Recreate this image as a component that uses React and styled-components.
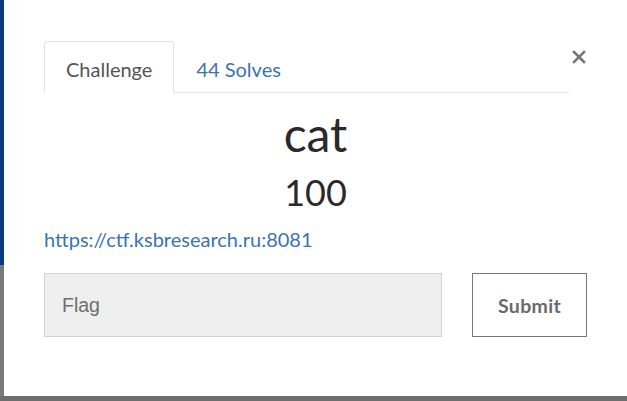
import React from 'react'
import styled, { createGlobalStyle } from 'styled-components'

const GlobalStyle = createGlobalStyle`
  html, body {
    margin: 0;
    padding: 0;
    background: #6e6e6e;
  }
  * {
    box-sizing: border-box;
  }
`

const Page = styled.div`
  width: 627px;
  height: 401px;
  display: flex;
  flex-direction: column;
  background: #6e6e6e;
  overflow: hidden;
`

const Stage = styled.div`
  height: 396px;
  display: flex;
`

const Backdrop = styled.div`
  width: 4px;
  background: linear-gradient(to bottom, #0c3a82 0, #0c3a82 265px, #7a7a7a 265px);
`

const Modal = styled.div`
  flex: 1;
  background: #fff;
  padding: 41px 40px 0 40px;
  font-family: Lato, 'Noto Sans', sans-serif;
  color: #333;
`

const Header = styled.div`
  display: flex;
  align-items: flex-start;
`

const Tabs = styled.div`
  flex: 1;
  display: flex;
  border-bottom: 1px solid #e2e2e2;
  margin-right: 1px;
`

const Tab = styled.div`
  height: 52px;
  padding: 3px 21px 0 21px;
  display: flex;
  align-items: center;
  font-size: 20px;
  border: 1px solid ${(p) => (p.$active ? '#e2e2e2' : 'transparent')};
  border-bottom-color: ${(p) => (p.$active ? '#fff' : 'transparent')};
  border-radius: 4px 4px 0 0;
  margin-bottom: -1px;
  color: ${(p) => (p.$active ? '#555' : '#3a74b2')};
  background: ${(p) => (p.$active ? '#fff' : 'transparent')};
`

const Close = styled.div`
  width: 17px;
  margin-top: 9px;
  display: flex;
  justify-content: center;
  color: #777;
`

const Title = styled.h1`
  margin: 14px 0 0;
  text-align: center;
  font-weight: 400;
  font-size: 48px;
  line-height: 54px;
  color: #2a2a2a;
`

const Points = styled.div`
  margin-top: 11px;
  text-align: center;
  font-weight: 400;
  font-size: 36px;
  line-height: 40px;
  color: #2a2a2a;
`

const Link = styled.a`
  display: block;
  margin-top: 15px;
  font-size: 20px;
  line-height: 24px;
  color: #3a74b2;
  text-decoration: none;
`

const Form = styled.div`
  margin-top: 22px;
  display: flex;
  justify-content: space-between;
`

const FlagInput = styled.input`
  width: 398px;
  height: 64px;
  padding: 0 17px;
  background: #efefef;
  border: 1px solid #d2d2d2;
  font-family: 'Liberation Sans', Arial, sans-serif;
  font-size: 19.5px;
  color: #333;
  outline: none;
  &::placeholder {
    color: #6f6f6f;
  }
`

const SubmitButton = styled.button`
  width: 115px;
  height: 64px;
  background: #fff;
  border: 1px solid #777;
  font-family: Lato, 'Noto Sans', sans-serif;
  font-weight: 700;
  font-size: 19.5px;
  color: #6a6a6a;
  letter-spacing: 0.3px;
`

export default function App() {
  return (
    <>
      <GlobalStyle />
      <Page>
        <Stage>
          <Backdrop />
          <Modal>
            <Header>
              <Tabs>
                <Tab $active>Challenge</Tab>
                <Tab>44 Solves</Tab>
              </Tabs>
              <Close>
                <svg width="14" height="14" viewBox="0 0 14 14">
                  <path d="M2 2 L12 12 M12 2 L2 12" stroke="#777" strokeWidth="2.6" strokeLinecap="square" />
                </svg>
              </Close>
            </Header>
            <Title>cat</Title>
            <Points>100</Points>
            <Link href="#">https://ctf.ksbresearch.ru:8081</Link>
            <Form>
              <FlagInput placeholder="Flag" />
              <SubmitButton>Submit</SubmitButton>
            </Form>
          </Modal>
        </Stage>
      </Page>
    </>
  )
}
